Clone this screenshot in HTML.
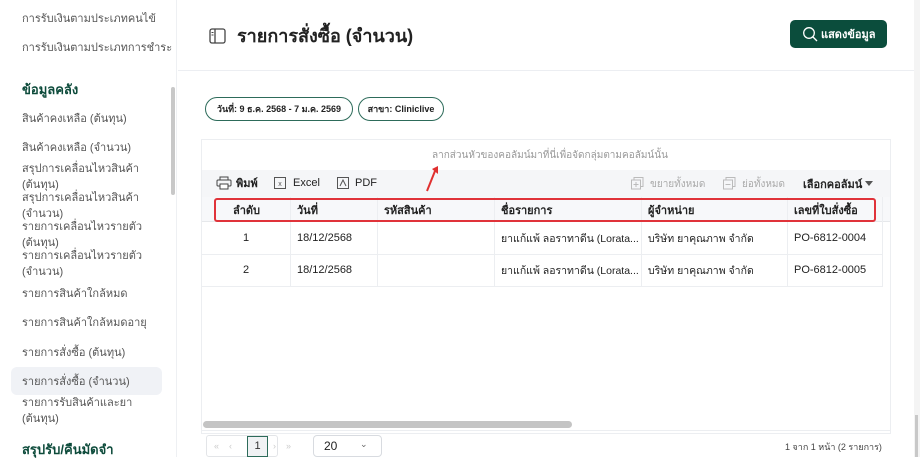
<!DOCTYPE html>
<html><head><meta charset="utf-8"><style>
*{box-sizing:border-box;margin:0;padding:0}
body{width:920px;height:457px;overflow:hidden;background:#fff;font-family:"Liberation Sans","Noto Sans CJK SC",sans-serif;color:#333;position:relative}
.a{position:absolute;white-space:nowrap;line-height:16px}
.sb{position:absolute;left:0;top:0;width:177px;height:457px;border-right:1px solid #eef0f3;background:#fff}
.si{position:absolute;left:22px;font-size:11px;color:#555;line-height:16px}
.sh{position:absolute;left:22px;font-size:13px;font-weight:bold;color:#0d4b3b;line-height:18px}
.c{font-size:11px;color:#222}
.t{font-size:10.5px;color:#222}
.th{font-size:11px;font-weight:bold;color:#222}
</style></head><body>
<div class="sb">
<div class="si" style="top:11px">การรับเงินตามประเภทคนไข้</div>
<div class="si" style="top:40px">การรับเงินตามประเภทการชำระ</div>
<div class="sh" style="top:81px">ข้อมูลคลัง</div>
<div class="si" style="top:111px">สินค้าคงเหลือ (ต้นทุน)</div>
<div class="si" style="top:140px">สินค้าคงเหลือ (จำนวน)</div>
<div class="si" style="top:161px">สรุปการเคลื่อนไหวสินค้า<br>(ต้นทุน)</div>
<div class="si" style="top:190px">สรุปการเคลื่อนไหวสินค้า<br>(จำนวน)</div>
<div class="si" style="top:219px">รายการเคลื่อนไหวรายตัว<br>(ต้นทุน)</div>
<div class="si" style="top:248px">รายการเคลื่อนไหวรายตัว<br>(จำนวน)</div>
<div class="si" style="top:286px">รายการสินค้าใกล้หมด</div>
<div class="si" style="top:315px">รายการสินค้าใกล้หมดอายุ</div>
<div class="si" style="top:345px">รายการสั่งซื้อ (ต้นทุน)</div>
<div style="position:absolute;left:11px;top:367px;width:151px;height:28px;background:#f0f2f6;border-radius:6px"></div>
<div class="si" style="top:374px">รายการสั่งซื้อ (จำนวน)</div>
<div class="si" style="top:395px">รายการรับสินค้าและยา<br>(ต้นทุน)</div>
<div class="sh" style="top:441px">สรุปรับ/คืนมัดจำ</div>
<div style="position:absolute;left:171px;top:87px;width:4px;height:108px;background:#c8c8c8;border-radius:2px"></div>
</div>
<div class="a" style="left:178px;top:70px;width:742px;height:1px;background:#eceef2"></div>
<svg class="a" style="left:209px;top:28px" width="17" height="16" viewBox="0 0 17 16"><rect x="1" y="1" width="15" height="14" rx="2" fill="none" stroke="#444" stroke-width="1.3"/><line x1="6" y1="1" x2="6" y2="15" stroke="#444" stroke-width="1.3"/><line x1="2.5" y1="4.5" x2="4.5" y2="4.5" stroke="#444"/><line x1="2.5" y1="7" x2="4.5" y2="7" stroke="#444"/></svg>
<div class="a" style="left:237px;top:24px;font-size:18px;line-height:24px;font-weight:bold;color:#222">รายการสั่งซื้อ (จำนวน)</div>
<div class="a" style="left:790px;top:20px;width:97px;height:28px;background:#0b4d3c;border-radius:5px"></div>
<svg class="a" style="left:802px;top:26px" width="16" height="16" viewBox="0 0 16 16"><circle cx="7" cy="7" r="5.3" fill="none" stroke="#fff" stroke-width="1.3"/><line x1="11" y1="11" x2="15" y2="15" stroke="#fff" stroke-width="1.3"/></svg>
<div class="a" style="left:821px;top:27px;font-size:11px;font-weight:bold;color:#fff">แสดงข้อมูล</div>
<div class="a" style="left:205px;top:97px;width:148px;height:24px;border:1px solid #2d6b5a;border-radius:12px;font-size:9px;font-weight:bold;text-align:center;line-height:22px;color:#222">วันที่: 9 ธ.ค. 2568 - 7 ม.ค. 2569</div>
<div class="a" style="left:358px;top:97px;width:86px;height:24px;border:1px solid #2d6b5a;border-radius:12px;font-size:9px;font-weight:bold;text-align:center;line-height:22px;color:#222">สาขา: Cliniclive</div>
<div class="a" style="left:201px;top:139px;width:690px;height:295px;border:1px solid #eceef1"></div>
<div class="a" style="left:432px;top:148px;font-size:10px;color:#999">ลากส่วนหัวของคอลัมน์มาที่นี่เพื่อจัดกลุ่มตามคอลัมน์นั้น</div>
<div class="a" style="left:202px;top:170px;width:688px;height:27px;background:#f5f6f8"></div>
<svg class="a" style="left:216px;top:176px" width="16" height="14" viewBox="0 0 16 14"><rect x="4" y="1" width="8" height="3" fill="none" stroke="#444"/><rect x="1" y="4" width="14" height="6" rx="1" fill="none" stroke="#444"/><rect x="4" y="8" width="8" height="5" fill="#fff" stroke="#444"/></svg>
<div class="a c" style="left:236px;top:176px;font-weight:bold">พิมพ์</div>
<svg class="a" style="left:274px;top:177px" width="12" height="12"><rect x=".5" y=".5" width="11" height="11" fill="none" stroke="#555"/><text x="6" y="9" font-size="7" text-anchor="middle" fill="#555" font-family="Liberation Sans">x</text></svg>
<div class="a c" style="left:293px;top:175px">Excel</div>
<svg class="a" style="left:337px;top:177px" width="12" height="12"><rect x=".5" y=".5" width="11" height="11" fill="none" stroke="#555"/><path d="M3 9 L6 3 L9 9" fill="none" stroke="#555"/></svg>
<div class="a c" style="left:355px;top:175px">PDF</div>
<svg class="a" style="left:424px;top:165px" width="16" height="28"><line x1="3" y1="26" x2="11" y2="6" stroke="#e03030" stroke-width="2"/><path d="M8 4 L14 1 L14 9 Z" fill="#e03030"/></svg>
<svg class="a" style="left:631px;top:177px" width="13" height="13"><rect x="3" y="0.5" width="9" height="9" fill="none" stroke="#bbb"/><rect x="0.5" y="3" width="9" height="9" fill="#f5f6f8" stroke="#bbb"/><path d="M5 5v5M2.5 7.5h5" stroke="#bbb"/></svg>
<div class="a" style="left:650px;top:177px;font-size:10px;color:#aaa">ขยายทั้งหมด</div>
<svg class="a" style="left:723px;top:177px" width="13" height="13"><rect x="3" y="0.5" width="9" height="9" fill="none" stroke="#bbb"/><rect x="0.5" y="3" width="9" height="9" fill="#f5f6f8" stroke="#bbb"/><path d="M2.5 7.5h5" stroke="#bbb"/></svg>
<div class="a" style="left:742px;top:177px;font-size:10px;color:#aaa">ย่อทั้งหมด</div>
<div class="a c" style="left:803px;top:177px;font-weight:bold">เลือกคอลัมน์</div>
<div class="a" style="left:865px;top:181px;width:0;height:0;border-left:4px solid transparent;border-right:4px solid transparent;border-top:5px solid #555"></div>
<div class="a" style="left:202px;top:197px;width:688px;height:25px;background:#f7f8fa;border-bottom:1px solid #e6e8eb"></div>
<div class="a" style="left:202px;top:254px;width:680px;height:1px;background:#eceef1"></div>
<div class="a" style="left:202px;top:286px;width:680px;height:1px;background:#eceef1"></div>
<div class="a" style="left:290px;top:197px;width:1px;height:90px;background:#eceef1"></div>
<div class="a" style="left:377px;top:197px;width:1px;height:90px;background:#eceef1"></div>
<div class="a" style="left:494px;top:197px;width:1px;height:90px;background:#eceef1"></div>
<div class="a" style="left:641px;top:197px;width:1px;height:90px;background:#eceef1"></div>
<div class="a" style="left:787px;top:197px;width:1px;height:90px;background:#eceef1"></div>
<div class="a" style="left:882px;top:197px;width:1px;height:90px;background:#eceef1"></div>
<div class="a th" style="left:233px;top:203px">ลำดับ</div>
<div class="a th" style="left:297px;top:203px">วันที่</div>
<div class="a th" style="left:384px;top:203px">รหัสสินค้า</div>
<div class="a th" style="left:501px;top:203px">ชื่อรายการ</div>
<div class="a th" style="left:648px;top:203px">ผู้จำหน่าย</div>
<div class="a th" style="left:794px;top:203px">เลขที่ใบสั่งซื้อ</div>
<div class="a" style="left:214px;top:198px;width:662px;height:24px;border:2px solid #e0333a;border-radius:3px"></div>
<div class="a c" style="left:243px;top:230px">1</div>
<div class="a c" style="left:297px;top:230px">18/12/2568</div>
<div class="a t" style="left:501px;top:231px">ยาแก้แพ้ ลอราทาดีน (Lorata...</div>
<div class="a t" style="left:648px;top:231px">บริษัท ยาคุณภาพ จำกัด</div>
<div class="a c" style="left:794px;top:230px">PO-6812-0004</div>
<div class="a c" style="left:243px;top:262px">2</div>
<div class="a c" style="left:297px;top:262px">18/12/2568</div>
<div class="a t" style="left:501px;top:263px">ยาแก้แพ้ ลอราทาดีน (Lorata...</div>
<div class="a t" style="left:648px;top:263px">บริษัท ยาคุณภาพ จำกัด</div>
<div class="a c" style="left:794px;top:262px">PO-6812-0005</div>
<div class="a" style="left:203px;top:421px;width:369px;height:7px;background:#c4c4c4;border-radius:4px"></div>
<div class="a" style="left:202px;top:430px;width:688px;height:1px;background:#eceef1"></div>
<div class="a" style="left:206px;top:435px;width:72px;height:22px;border:1px solid #e3e5e8;border-radius:3px"></div>
<div class="a" style="left:214px;top:438px;font-size:9px;color:#ccc">«&nbsp;&nbsp;&nbsp;&nbsp;‹</div>
<div class="a" style="left:247px;top:436px;width:21px;height:21px;border:1px solid #2d6b5a;background:#f0f2f4;font-size:11px;text-align:center;line-height:19px">1</div>
<div class="a" style="left:273px;top:438px;font-size:9px;color:#ccc">›&nbsp;&nbsp;&nbsp;&nbsp;»</div>
<div class="a" style="left:313px;top:435px;width:69px;height:22px;border:1px solid #d8dbe0;border-radius:4px"></div>
<div class="a c" style="left:324px;top:438px;font-size:12px">20</div>
<div class="a" style="left:360px;top:436px;font-size:9px;color:#666">⌄</div>
<div class="a" style="left:785px;top:439px;font-size:9px;color:#444">1 จาก 1 หน้า (2 รายการ)</div>
<div class="a" style="left:914px;top:0;width:6px;height:457px;background:#f4f4f4"></div>
<div class="a" style="left:915px;top:415px;width:3px;height:42px;background:#c8c8c8"></div>
</body></html>
